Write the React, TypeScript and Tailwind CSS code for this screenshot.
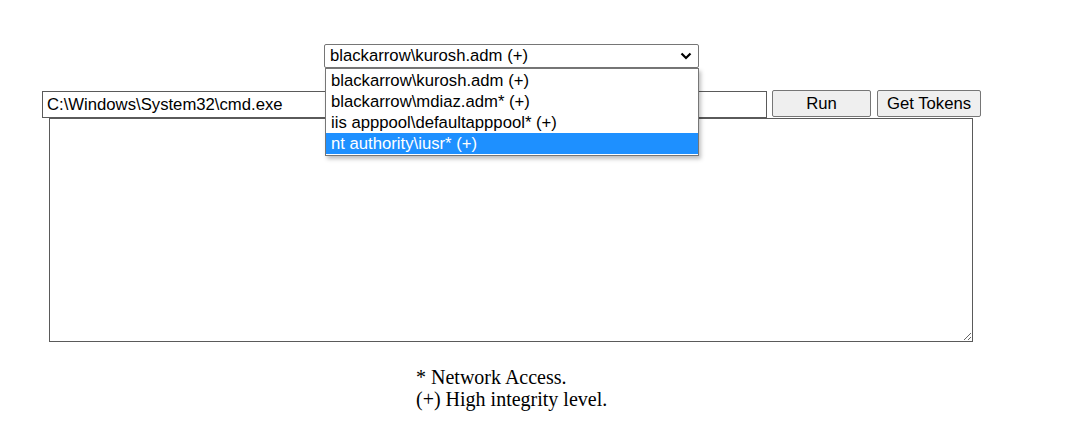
import React from "react";

const users = [
  "blackarrow\\kurosh.adm (+)",
  "blackarrow\\mdiaz.adm* (+)",
  "iis apppool\\defaultapppool* (+)",
  "nt authority\\iusr* (+)",
];

const ChevronDown = () => (
  <svg width="12" height="8" viewBox="0 0 12 8" className="shrink-0">
    <path d="M1.5 1.5 L6 6 L10.5 1.5" fill="none" stroke="#000" strokeWidth="2.2" />
  </svg>
);

const UserSelect = () => {
  const highlighted = 3;

  return (
    <div className="relative ml-[324px] w-[375px]">
      <div className="flex h-[24px] items-center justify-between rounded-[2px] border border-[#767676] bg-white pl-[5px] pr-[6px] text-[16.7px] leading-none text-black">
        <span>{users[0]}</span>
        <ChevronDown />
      </div>
      {/* opened list */}
      <ul className="absolute left-px top-[24px] z-10 w-[374px] border border-[#767676] bg-white py-px text-[16.7px] text-black shadow-[2px_3px_4px_rgba(0,0,0,0.25)]">
        {users.map((u, i) => (
          <li
            key={u}
            className={
              i === highlighted
                ? "h-[21px] bg-[#1e90ff] pl-[5px] leading-[21px] text-white"
                : "h-[21px] pl-[5px] leading-[21px]"
            }
          >
            {u}
          </li>
        ))}
      </ul>
    </div>
  );
};

const App = () => {
  return (
    <div
      className="min-h-[445px] bg-white pt-[44px]"
      style={{ fontFamily: '"Liberation Sans", Arial, sans-serif' }}
    >
      <UserSelect />

      <div className="mt-[23px] flex items-start pl-[42px]">
        <input
          defaultValue="C:\Windows\System32\cmd.exe"
          className="h-[27px] w-[725px] border border-[#5a5a5a] px-[4px] text-[16.7px] text-black outline-none"
        />
        <button className="ml-[5px] mt-[-1px] h-[27px] w-[99px] rounded-[2px] border border-[#767676] bg-[#efefef] text-[16.7px] text-black">
          Run
        </button>
        <button className="ml-[6px] mt-[-1px] h-[27px] w-[104px] rounded-[2px] border border-[#767676] bg-[#efefef] text-[16.7px] text-black">
          Get Tokens
        </button>
      </div>

      <textarea className="ml-[49px] block h-[224px] w-[924px] resize border border-[#5a5a5a] outline-none" />

      <div
        className="ml-[416px] mt-[24px] text-[20px] leading-[22px] text-black"
        style={{ fontFamily: '"Liberation Serif", "Times New Roman", serif' }}
      >
        <div>* Network Access.</div>
        <div>(+) High integrity level.</div>
      </div>
    </div>
  );
};

export default App;
